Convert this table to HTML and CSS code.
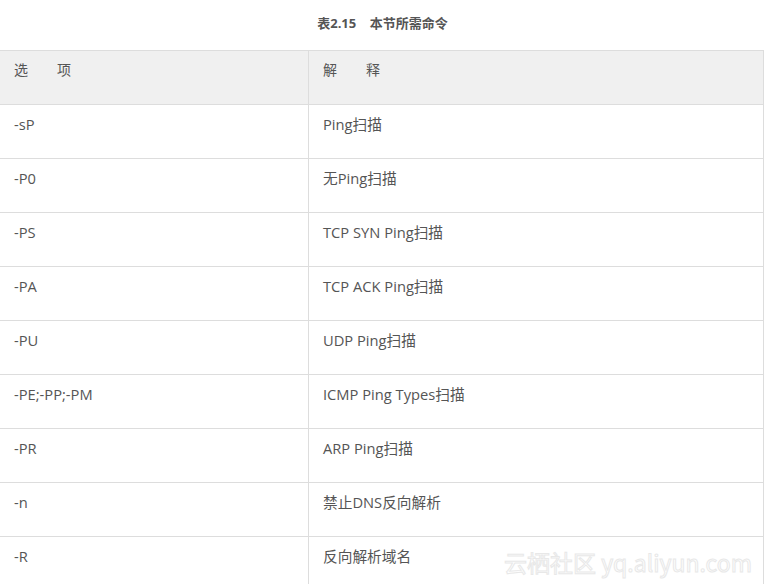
FILE: index.html
```html
<!DOCTYPE html>
<html lang="zh">
<head>
<meta charset="utf-8">
<link rel="stylesheet" href="styles.css">
</head>
<body>
<div class="page">
  <p class="caption">表2.15&nbsp;&nbsp;&nbsp;&nbsp;本节所需命令</p>
  <table class="cmd-table">
    <thead>
      <tr><th class="col-opt"><span class="gap">选</span>项</th><th><span class="gap">解</span>释</th></tr>
    </thead>
    <tbody>
      <tr><td>-sP</td><td>Ping扫描</td></tr>
      <tr><td>-P0</td><td>无Ping扫描</td></tr>
      <tr><td>-PS</td><td>TCP SYN Ping扫描</td></tr>
      <tr><td>-PA</td><td>TCP ACK Ping扫描</td></tr>
      <tr><td>-PU</td><td>UDP Ping扫描</td></tr>
      <tr><td>-PE;-PP;-PM</td><td>ICMP Ping Types扫描</td></tr>
      <tr><td>-PR</td><td>ARP Ping扫描</td></tr>
      <tr><td>-n</td><td>禁止DNS反向解析</td></tr>
      <tr><td>-R</td><td>反向解析域名</td></tr>
    </tbody>
  </table>
  <div class="watermark">云栖社区 yq.aliyun.com</div>
</div>
</body>
</html>
```
FILE: styles.css
```css
html, body {
  margin: 0;
  padding: 0;
  background: #fff;
}
body {
  font-family: "Open Sans", "Noto Sans CJK SC", sans-serif;
  color: #555;
  overflow: hidden;
}
.page {
  position: relative;
  width: 765px;
  height: 584px;
  overflow: hidden;
}
.caption {
  margin: 0;
  padding-top: 14px;
  height: 36px;
  box-sizing: border-box;
  text-align: center;
  font-size: 13px;
  font-weight: bold;
  line-height: 18px;
  color: #555;
}
.cmd-table {
  border-collapse: collapse;
  width: 765px;
  margin-left: -1px;
  margin-top: 14px;
  table-layout: fixed;
  font-size: 14.7px;
}
.cmd-table th, .cmd-table td {
  border: 1px solid #dddddd;
  height: 53px;
  box-sizing: border-box;
  padding: 9px 14px 0 14px;
  vertical-align: top;
  text-align: left;
  font-weight: normal;
  line-height: 20px;
  color: #555;
}
.cmd-table th {
  background: #f0f0f0;
  font-size: 14px;
}
.gap {
  display: inline-block;
  margin-right: 29px;
}
.cmd-table tr {
  height: 54px;
}
.col-opt {
  width: 309px;
}
.watermark {
  position: absolute;
  left: 504px;
  top: 545px;
  font-size: 23px;
  font-family: "Noto Sans CJK SC", sans-serif;
  color: #fff;
  -webkit-text-stroke: 1px #e8e8e8;
  white-space: nowrap;
}
```
